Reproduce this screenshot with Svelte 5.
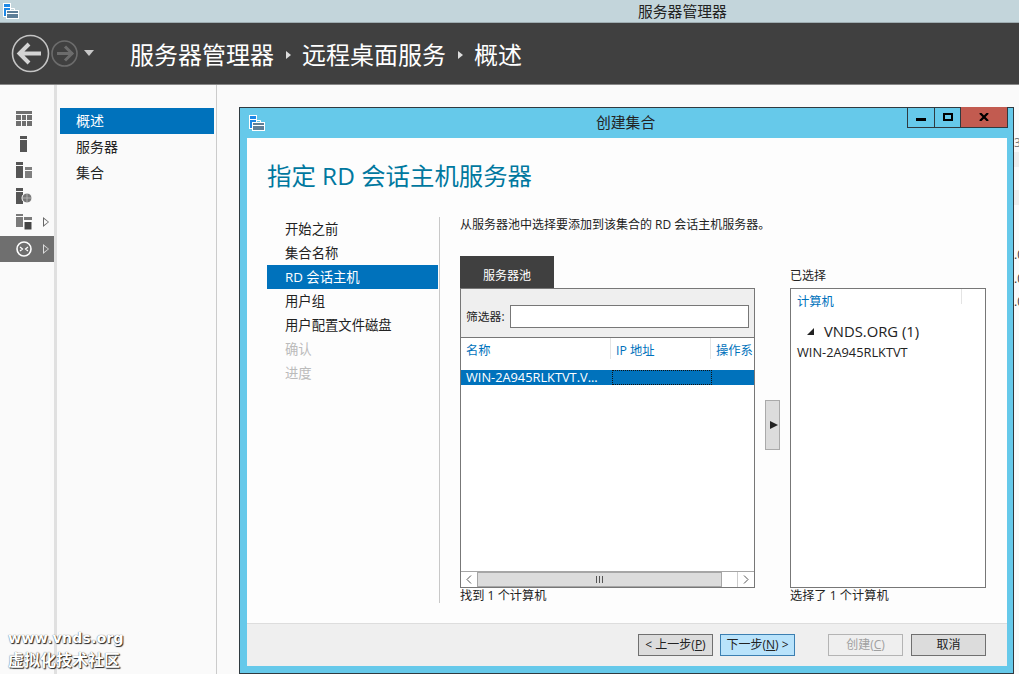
<script>
  const steps = [
    { t: '开始之前' }, { t: '集合名称' }, { t: 'RD 会话主机', active: true }, { t: '用户组' },
    { t: '用户配置文件磁盘' }, { t: '确认', off: true }, { t: '进度', off: true }
  ];
</script>

{#snippet toolicon()}
  <svg class="appicon" width="16" height="16" viewBox="0 0 16 16">
    <rect x="0.500" y="0.500" width="7" height="13" fill="#1e88e5" stroke="#fff"/>
    <path d="M1 4.500h6" stroke="#fff"/>
    <rect x="3.500" y="7.500" width="12" height="8" fill="#5f7f98" stroke="#fff"/>
    <path d="M7.500 7.500V5.500h4v2" fill="none" stroke="#fff"/>
    <path d="M4 10.500h11" stroke="#fff"/>
  </svg>
{/snippet}

<div class="app">
  <div class="titlebar">
    {@render toolicon()}
    <span class="apptitle">服务器管理器</span>
  </div>

  <header class="header">
    <svg class="back" width="39" height="39" viewBox="0 0 39 39">
      <circle cx="19.500" cy="19.500" r="18" fill="none" stroke="#c4c4c4" stroke-width="1.600"/>
      <path d="M8 19.500h22M18 10l-9.500 9.500L18 29" fill="none" stroke="#d4d4d4" stroke-width="4"/>
    </svg>
    <svg class="fwd" width="27" height="27" viewBox="0 0 27 27">
      <circle cx="13.500" cy="13.500" r="12.500" fill="none" stroke="#6c6c6c" stroke-width="1.600"/>
      <path d="M22 13.500H6M14 6.500l7 7-7 7" fill="none" stroke="#6c6c6c" stroke-width="3"/>
    </svg>
    <span class="drop"></span>
    <nav class="crumbs">
      <span>服务器管理器</span><i></i><span>远程桌面服务</span><i></i><span>概述</span>
    </nav>
  </header>

  <div class="body">
    <aside class="rail">
      <div class="ri">
        <svg width="16" height="15" viewBox="0 0 16 15"><path fill="#6f6f6f" d="M0 0h16v3H0zM0 4h5v5H0zM6 4h4v5H6zM11 4h5v5h-5zM0 10h5v5H0zM6 10h4v5H6zM11 10h5v5h-5z"/></svg>
      </div>
      <div class="ri">
        <svg class="s2" width="7" height="16" viewBox="0 0 7 16"><path fill="#555" d="M0 0h7v3H0zM0 4h7v12H0z"/></svg>
      </div>
      <div class="ri">
        <svg width="16" height="16" viewBox="0 0 16 16"><path fill="#555" d="M0 0h7v3H0zM0 4h7v12H0z"/><path fill="#7f7f7f" d="M9 5h7v3H9zM9 9h7v7H9z"/></svg>
      </div>
      <div class="ri">
        <svg width="16" height="16" viewBox="0 0 16 16"><path fill="#555" d="M0 0h7v3H0zM0 4h7v12H0z"/><circle cx="11" cy="10" r="5" fill="#777" stroke="#fff"/><path d="M7 10h8M11 6v8" stroke="#bbb" stroke-width=".8"/></svg>
      </div>
      <div class="ri">
        <svg width="16" height="16" viewBox="0 0 16 16"><path fill="#7a7a7a" d="M0 0h7v2H0zM0 3h7v10H0zM8 3h8v3H8z"/><path fill="#444" stroke="#fff" d="M8 7.500h8v8.500H8z"/></svg>
        <span class="tri"></span>
      </div>
      <div class="ri on">
        <svg width="16" height="16" viewBox="0 0 16 16"><circle cx="8" cy="8" r="7" fill="none" stroke="#fff" stroke-width="1.600"/><path d="M4 6l2.500 2L4 10M12 6L9.500 8l2.500 2" fill="none" stroke="#fff" stroke-width="1.200"/></svg>
        <span class="tri"></span>
      </div>
    </aside>
    <div class="rail-sep"></div>

    <nav class="side">
      <div class="sitem on">概述</div>
      <div class="sitem">服务器</div>
      <div class="sitem">集合</div>
    </nav>

    <main class="stage">
      <div class="bg-bits">
        <span class="bit b1">3:</span>
        <span class="row r1"></span>
        <span class="row r2"></span>
        <span class="bit b2">.0</span>
        <span class="bit b3">.0</span>
        <span class="bit b4">.0</span>
      </div>

      <section class="win">
        <div class="wtitle">
          {@render toolicon()}
          <span class="wname">创建集合</span>
          <div class="wctl">
            <button class="cb c-min"><span class="min"></span></button>
            <button class="cb c-max"><span class="max"></span></button>
            <button class="cb close"><svg width="10" height="8" viewBox="0 0 10 8"><path d="M1 0l8 8M9 0L1 8" stroke="#000" stroke-width="2.200"/></svg></button>
          </div>
        </div>

        <div class="wbody">
          <div class="wmain">
            <h1>指定 RD 会话主机服务器</h1>
            <div class="cols">
              <ul class="steps">
                {#each steps as s}
                  <li class:active={s.active} class:off={s.off}>{s.t}</li>
                {/each}
              </ul>
              <div class="pane">
                <p class="desc">从服务器池中选择要添加到该集合的 RD 会话主机服务器。</p>
                <div class="picker">
                  <div class="poolcol">
                    <div class="tab">服务器池</div>
                    <div class="pool">
                      <div class="filter">
                        <label for="flt">筛选器:</label>
                        <input id="flt" type="text" />
                      </div>
                      <div class="thead">
                        <span class="c1">名称</span><span class="c2">IP 地址</span><span class="c3">操作系</span>
                      </div>
                      <div class="trow">
                        <span class="c1">WIN-2A945RLKTVT.V...</span><span class="c2 focus"></span><span class="c3"></span>
                      </div>
                      <div class="tfill"></div>
                      <div class="hscroll">
                        <span class="sb"><svg width="6" height="9" viewBox="0 0 6 9"><path d="M5 .5l-4 4 4 4" fill="none" stroke="#555"/></svg></span>
                        <span class="thumb"><i></i></span>
                        <span class="track"></span>
                        <span class="sb"><svg width="6" height="9" viewBox="0 0 6 9"><path d="M1 .5l4 4-4 4" fill="none" stroke="#555"/></svg></span>
                      </div>
                    </div>
                    <div class="count">找到 1 个计算机</div>
                  </div>

                  <div class="addcol"><button class="add"><span></span></button></div>

                  <div class="selcol">
                    <div class="seltitle">已选择</div>
                    <div class="selbox">
                      <div class="selhead"><span>计算机</span></div>
                      <div class="group"><span class="gtri"></span>VNDS.ORG (1)</div>
                      <div class="selitem">WIN-2A945RLKTVT</div>
                    </div>
                    <div class="count">选择了 1 个计算机</div>
                  </div>
                </div>
              </div>
            </div>
          </div>

          <footer class="wfoot">
            <button class="btn">&lt; 上一步(<u>P</u>)</button>
            <button class="btn hot">下一步(<u>N</u>) &gt;</button>
            <button class="btn dis">创建(<u>C</u>)</button>
            <button class="btn">取消</button>
          </footer>
        </div>
      </section>
    </main>
  </div>

  <div class="mark"><div>www.vnds.org</div><div>虚拟化技术社区</div></div>
</div>

<style>
  :global(body) { margin: 0; overflow: hidden; }
  * { box-sizing: border-box; }
  .app {
    width: 1019px; height: 674px; position: relative; overflow: hidden; display: flex; flex-direction: column;
    background: #fafafa; color: #222;
    font: 12px/16px "Open Sans", "Noto Sans CJK SC", sans-serif;
  }
  .titlebar {
    height: 23px; flex: none; background: #c3d5db; border-bottom: 1px solid #9fadb2;
    display: flex; align-items: center; position: relative; padding: 0 0 1px 3px;
  }
  .apptitle { position: absolute; left: 638px; top: 3px; font-size: 14.800px; color: #222; }
  .appicon { display: block; flex: none; }

  .header { height: 62px; flex: none; background: #404040; display: flex; align-items: center; padding: 0 0 1px 11px; border-bottom: 1px solid #888; }
  .fwd { margin-left: 1px; }
  .drop { width: 0; height: 0; margin-left: 6px; border: 5px solid transparent; border-top: 6px solid #c8c8c8; border-bottom: 0; }
  .crumbs { margin: 3px 0 0 36px; display: flex; align-items: center; color: #fff; font-size: 24px; line-height: 30px; }
  .crumbs i { width: 0; height: 0; margin: 0 11px 0 12px; border: 4px solid transparent; border-left: 5px solid #ddd; border-right: 0; }

  .body { flex: 1; display: flex; min-height: 0; }
  .rail { width: 54px; flex: none; padding-top: 20px; display: flex; flex-direction: column; }
  .ri { height: 26px; display: flex; align-items: center; padding-left: 16px; position: relative; flex: none; }
  .ri .s2 { margin-left: 4px; }
  .ri.on { background: #6f6f6f; margin-top: 1px; }
  .tri { position: absolute; left: 43px; top: 8px; width: 0; height: 0; border: 5px solid transparent; border-left: 6px solid #666; border-right: 0; }
  .tri::after { content: ""; position: absolute; left: -5px; top: -3px; border: 3px solid transparent; border-left: 4px solid #fafafa; border-right: 0; }
  .ri.on .tri { border-left-color: #ddd; }
  .ri.on .tri::after { border-left-color: #6f6f6f; }
  .rail-sep { width: 3px; flex: none; background: #e0e0e0; }
  .side { width: 160px; flex: none; padding: 23px 0 0 3px; border-right: 1px solid #cbcbcb; }
  .sitem { height: 26px; width: 154px; padding: 5px 0 0 16px; font-size: 14px; }
  .sitem.on { background: #0072bc; color: #fff; }

  .stage { flex: 1; position: relative; }
  .bg-bits { color: #777; }
  .bit { position: absolute; left: 797px; }
  .b1 { top: 50px; }
  .b2 { top: 162px; color: #333; } .b3 { top: 186px; color: #333; } .b4 { top: 209px; color: #333; }
  .row { position: absolute; left: 797px; width: 10px; background: #eee; }
  .r1 { top: 67px; height: 15px; }
  .r2 { top: 105px; height: 15px; }

  .win {
    position: absolute; left: 22px; top: 22px; width: 775px; height: 567px;
    background: #66c9ea; border: 1px solid #2f3a40; padding: 0 6px 7px 7px; display: flex; flex-direction: column;
  }
  .wtitle { height: 30px; flex: none; display: flex; align-items: center; position: relative; padding: 0 0 1px 2px; }
  .wname { position: absolute; left: 349px; top: 6px; font-size: 14.800px; color: #222; }
  .wctl { position: absolute; right: -1px; top: -1px; display: flex; border: 1px solid #2f3a40; border-top: 0; height: 21px; }
  .cb { height: 20px; padding: 0; border: 0; border-right: 1px solid #2f3a40; background: transparent; display: flex; align-items: center; justify-content: center; }
  .c-min { width: 27px; }
  .c-max { width: 26px; }
  .cb.close { width: 46px; background: #c25b50; border-right: 0; }
  .min { width: 10px; height: 3px; background: #000; margin-top: 5px; }
  .max { width: 10px; height: 8px; border: 2px solid #000; }

  .wbody { flex: 1; background: #fdfdfd; display: flex; flex-direction: column; min-height: 0; }
  .wmain { flex: 1; padding: 23px 0 0 20px; min-height: 0; display: flex; flex-direction: column; }
  h1 { margin: 0; font-size: 24.400px; line-height: 30px; font-weight: 400; color: #00789f; }
  .cols { flex: 1; display: flex; margin-top: 26px; min-height: 0; }
  .steps { list-style: none; margin: 0; padding: 0; width: 171px; flex: none; }
  .steps li { height: 24px; padding: 4px 0 0 18px; font-size: 13.330px; line-height: 16px; }
  .steps li.active { background: #0072bc; color: #fff; }
  .steps li.off { color: #bbb; }
  .pane { flex: 1; margin-left: 1px; border-left: 1px solid #c8c8c8; padding-left: 20px; height: 386px; }
  .desc { margin: 0; font-size: 12px; line-height: 16px; }
  .picker { display: flex; margin-top: 23px; }
  .poolcol { width: 295px; flex: none; }
  .tab { width: 94px; height: 32px; background: #404040; color: #fff; padding: 12px 0 0 23px; line-height: 16px; font-size: 12px; }
  .pool { height: 300px; border: 1px solid #777; display: flex; flex-direction: column; background: #fff; }
  .filter { height: 49px; flex: none; background: #efefef; border-bottom: 1px solid #777; display: flex; align-items: center; padding: 15px 5px 9px 5px; }
  .filter label { font-size: 11.800px; width: 44px; flex: none; white-space: nowrap; }
  .filter input { flex: 1; min-width: 0; height: 23px; border: 1px solid #777; background: #fff; padding: 0; }
  .thead { height: 32px; flex: none; display: flex; color: #0072bc; }
  .thead span { padding: 5px 0 0 5px; height: 21px; border-right: 1px solid #e4e4e4; overflow: hidden; white-space: nowrap; font-size: 12.300px; }
  .c1 { width: 150px; flex: none; }
  .c2 { width: 100px; flex: none; }
  .c3 { flex: 1; }
  .thead .c3 { border-right: 0; }
  .trow { height: 15px; flex: none; display: flex; background: #0072bc; color: #fff; font-size: 12.800px; line-height: 15px; }
  .trow .c1 { padding-left: 5px; white-space: nowrap; }
  .focus { border: 1px dotted #111; margin-left: 1px; }
  .tfill { flex: 1; }
  .hscroll { height: 16px; flex: none; display: flex; border-top: 1px solid #a6a6a6; align-items: stretch; }
  .sb { width: 16px; flex: none; display: flex; align-items: center; justify-content: center; background: #fff; }
  .thumb { width: 245px; flex: none; background: #dcdcdc; border: 1px solid #a6a6a6; display: flex; align-items: center; justify-content: center; }
  .thumb i { width: 7px; height: 7px; background: repeating-linear-gradient(90deg, #555 0 1px, transparent 1px 3px); }
  .track { flex: 1; border-right: 1px solid #ccc; }
  .count { height: 16px; font-size: 12.200px; line-height: 16px; }
  .addcol { width: 35px; flex: none; padding: 144px 0 0 10px; }
  .add { width: 15px; height: 50px; padding: 0; background: #dcdcdc; border: 1px solid #aaa; display: flex; align-items: center; justify-content: center; }
  .add span { width: 0; height: 0; border: 4px solid transparent; border-left: 8px solid #222; border-right: 0; margin-left: 2px; }
  .selcol { width: 196px; flex: none; padding-top: 12px; }
  .seltitle { height: 20px; font-size: 12px; line-height: 16px; }
  .selbox { height: 300px; border: 1px solid #777; background: #fff; }
  .selhead { height: 25px; color: #0072bc; padding: 5px 0 0 6px; font-size: 12.300px; position: relative; }
  .selhead::after { content: ""; position: absolute; right: 23px; top: 0; height: 15px; width: 1px; background: #e4e4e4; }
  .group { font-size: 14.800px; line-height: 18px; padding: 8px 0 0 33px; position: relative; color: #222; }
  .gtri { position: absolute; left: 16px; top: 14px; width: 0; height: 0; border-style: solid; border-width: 0 0 7px 7px; border-color: transparent transparent #222 transparent; }
  .selitem { padding: 4px 0 0 6px; font-size: 12.800px; }

  .wfoot { height: 43px; flex: none; background: #efefef; border-top: 1px solid #ddd; display: flex; align-items: flex-start; padding: 10px 20px 0 391px; }
  .btn { height: 22px; width: 75px; padding: 0; background: #dcdcdc; border: 1px solid #707070; font: inherit; font-size: 12px; line-height: 18px; color: #222; margin-right: 8px; white-space: nowrap; }
  .btn.hot { background: #b9e3fb; border-color: #3c7fb1; margin-right: 0; margin-left: -1px; }
  .btn.dis { background: #efefef; border-color: #b4b4b4; color: #a0a0a0; margin-left: 33px; }
  .btn:last-child { margin-right: 0; }

  .mark {
    position: absolute; left: 8px; top: 627px; color: #fff; font-size: 16px; line-height: 22px; font-weight: 700;
    text-shadow: 1px 1px 1px #222, 0 0 1px #444;
  }
  .mark div:first-child { font-family: "DejaVu Sans", sans-serif; font-size: 14.400px; }
</style>
